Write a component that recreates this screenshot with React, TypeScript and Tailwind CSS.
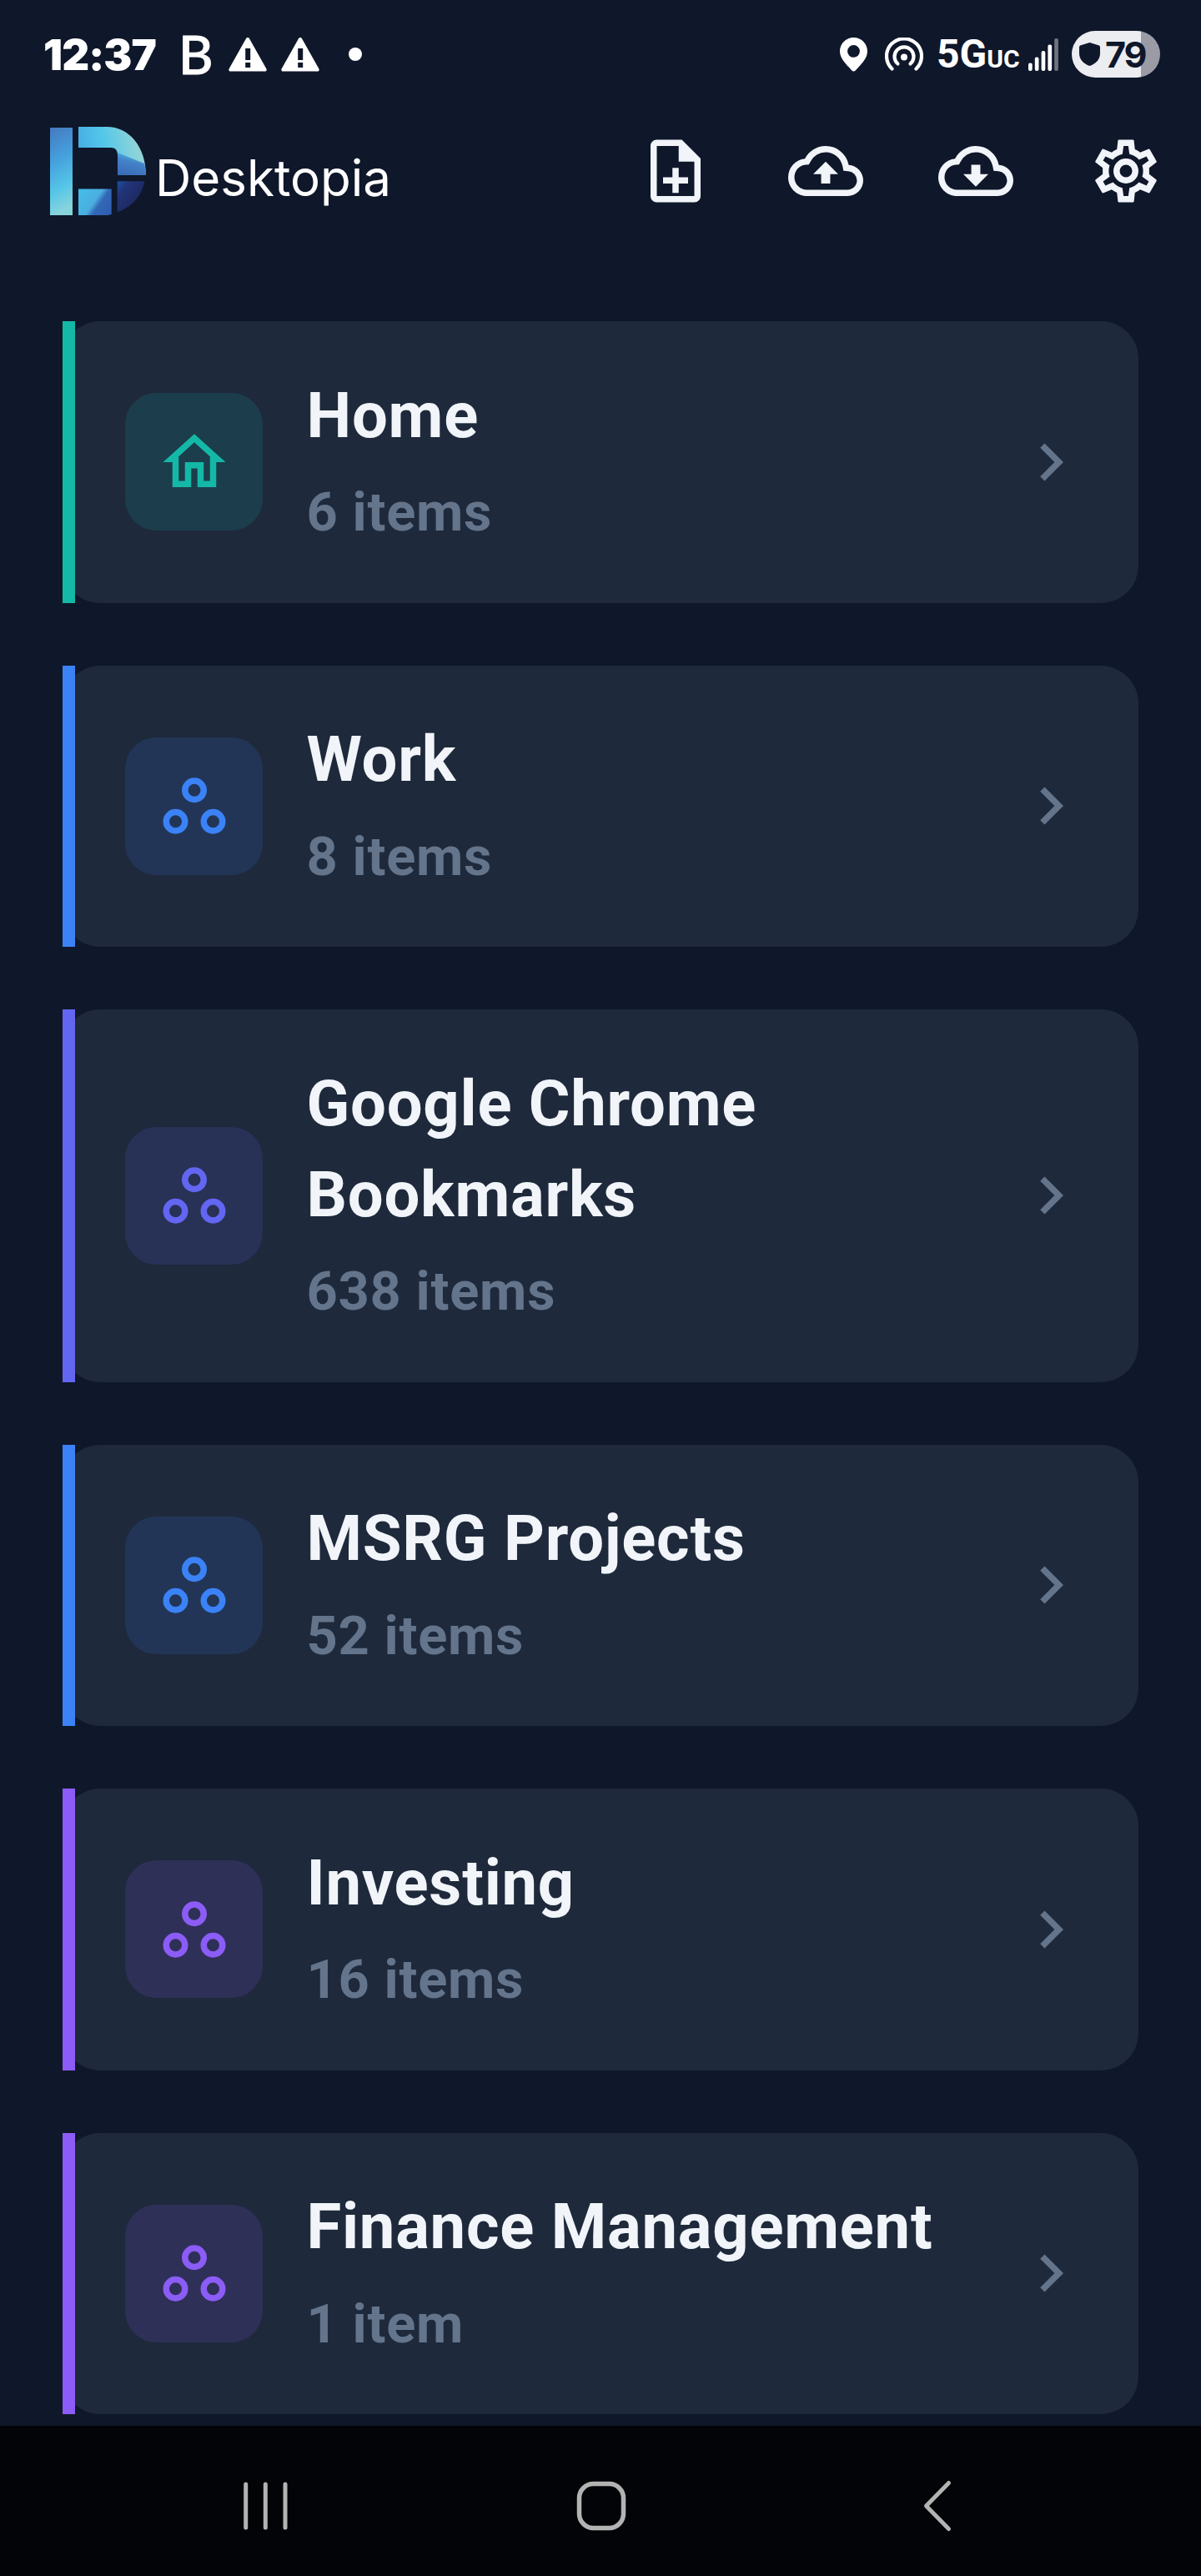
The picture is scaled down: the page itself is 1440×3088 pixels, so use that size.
import type { ComponentType } from 'react';
import {
  MdChevronRight,
  MdOutlineCloudDownload,
  MdOutlineCloudUpload,
  MdOutlineHome,
} from 'react-icons/md';

interface IconProps {
  className?: string;
}

interface Folder {
  name: string;
  count: number;
  Icon: ComponentType<IconProps>;
  bar: string;
  tile: string;
}

function WorkspacesIcon({ className }: IconProps) {
  return (
    <svg viewBox="0 0 24 24" fill="none" stroke="currentColor" strokeWidth="2" className={className}>
      <circle cx="12" cy="7" r="3" />
      <circle cx="6" cy="17" r="3" />
      <circle cx="18" cy="17" r="3" />
    </svg>
  );
}

function NoteAddIcon({ className }: IconProps) {
  return (
    <svg viewBox="0 0 24 24" fill="currentColor" className={className}>
      <path d="M14 2H6c-1.1 0-2 .9-2 2v16c0 1.1.9 2 2 2h12c1.1 0 2-.9 2-2V8l-6-6zm4 18H6V4h7v5h5v11z" />
      <path d="M11 11h2v3h3v2h-3v3h-2v-3H8v-2h3z" />
    </svg>
  );
}

function CogIcon({ className }: IconProps) {
  return (
    <svg viewBox="0 0 24 24" fill="currentColor" className={className}>
      <path
        fillRule="evenodd"
        d="M9.700 2h4.600l.25.200.320 2.870q.9.350 1.690.980l2.750-1.120.3.120 2.200 3.850-.05.300L19.430 11v2l2.330 1.800.05.300-2.200 3.850-.3.120-2.750-1.120q-.8.630-1.690.980l-.32 2.870-.25.200H9.700l-.25-.2-.32-2.870q-.9-.35-1.690-.98l-2.750 1.120-.3-.12-2.200-3.850.05-.3L4.570 13v-2L2.240 9.200l-.05-.3 2.200-3.850.3-.12 2.750 1.120q.8-.63 1.690-.98l.32-2.870zM11.250 4l-.37 2.610c-1.200.25-2.260.89-3.030 1.780L5.440 7.350l-.75 1.300L6.800 10.200c-.4 1.170-.4 2.440 0 3.600l-2.120 1.560.75 1.300 2.430-1.040c.77.88 1.820 1.520 3.010 1.760l.37 2.620h1.520l.37-2.610c1.190-.25 2.240-.89 3.010-1.770l2.430 1.040.75-1.300-2.120-1.550c.4-1.170.4-2.440 0-3.610l2.110-1.550-.75-1.300-2.410 1.040c-.77-.89-1.830-1.530-3.030-1.770L12.750 4z"
      />
      <circle cx="12" cy="12" r="3" fill="none" stroke="currentColor" strokeWidth="2" />
    </svg>
  );
}

function WarningIcon({ className }: IconProps) {
  return (
    <svg viewBox="0 0 46 41" className={className}>
      <path d="M21 1.2a2.3 2.3 0 0 1 4 0L45.4 37.6a2 2 0 0 1-1.8 3H2.4a2 2 0 0 1-1.8-3z" fill="#fff" />
      <path d="M20.2 13h6v14h-6zM20.2 30h6v6h-6z" fill="#0f172a" />
    </svg>
  );
}

const folders: Folder[] = [
  { name: 'Home', count: 6, Icon: MdOutlineHome, bar: 'bg-[#14b8a6]', tile: 'bg-[#14b8a6]/15 text-[#14b8a6]' },
  { name: 'Work', count: 8, Icon: WorkspacesIcon, bar: 'bg-[#3b82f6]', tile: 'bg-[#3b82f6]/15 text-[#3b82f6]' },
  { name: 'Google Chrome Bookmarks', count: 638, Icon: WorkspacesIcon, bar: 'bg-[#6366f1]', tile: 'bg-[#6366f1]/15 text-[#6366f1]' },
  { name: 'MSRG Projects', count: 52, Icon: WorkspacesIcon, bar: 'bg-[#3b82f6]', tile: 'bg-[#3b82f6]/15 text-[#3b82f6]' },
  { name: 'Investing', count: 16, Icon: WorkspacesIcon, bar: 'bg-[#8b5cf6]', tile: 'bg-[#8b5cf6]/15 text-[#8b5cf6]' },
  { name: 'Finance Management', count: 1, Icon: WorkspacesIcon, bar: 'bg-[#8b5cf6]', tile: 'bg-[#8b5cf6]/15 text-[#8b5cf6]' },
];

function StatusBar() {
  return (
    <div className="flex h-[130px] shrink-0 items-center justify-between pl-[52px] pr-[49px] text-white">
      <div className="flex items-center">
        <span className="w-[162px] whitespace-nowrap font-['Inter',sans-serif] text-[51px] font-black leading-none tracking-[-0.9px]">
          12:37
        </span>
        <span className="w-[60px] font-['Lato',sans-serif] text-[64px] font-medium leading-none [-webkit-text-stroke:0.8px_#fff]">
          B
        </span>
        <WarningIcon className="h-[41px] w-[46px]" />
        <WarningIcon className="ml-[17px] h-[41px] w-[46px]" />
        <span className="ml-[35px] size-4 rounded-full bg-white" />
      </div>

      <div className="flex items-center">
        <svg viewBox="0 0 33 41" className="h-[41px] w-[33px]">
          <path
            fillRule="evenodd"
            fill="#fff"
            d="M16.5 0C7.4 0 0 7.2 0 16.4 0 25.500 8 32 14.300 39.600a2.900 2.900 0 0 0 4.400 0C25 32 33 25.500 33 16.400 33 7.200 25.600 0 16.500 0zm0 9a7.400 7.400 0 1 1 0 14.800 7.400 7.400 0 0 1 0-14.800z"
          />
        </svg>
        <svg viewBox="0 0 46 40" fill="none" stroke="#fff" strokeWidth="4.200" strokeLinecap="round" className="ml-[21px] h-10 w-[46px]">
          <path d="M8.500 37.500A21 21 0 1 1 37.500 37.500" />
          <path d="M15.500 31.500A11.500 11.500 0 1 1 30.500 31.500" />
          <circle cx="23" cy="23.500" r="4" fill="#fff" stroke="none" />
        </svg>
        <span className="ml-4 flex w-[110px] items-baseline font-['Roboto',sans-serif] leading-none">
          <span className="text-[48px] font-bold">5G</span>
          <span className="text-[30px] font-bold">UC</span>
        </span>
        <svg viewBox="0 0 36 39" fill="#fff" className="h-[39px] w-9">
          <rect x="0" y="29.500" width="4.700" height="9.500" rx="2" />
          <rect x="7.800" y="22.500" width="4.700" height="16.500" rx="2" />
          <rect x="15.600" y="15" width="4.700" height="24" rx="2" />
          <rect x="23.400" y="7.500" width="4.700" height="31.500" rx="2" />
          <rect x="31.200" y="0" width="4.700" height="39" rx="2" opacity="0.4" />
        </svg>
        <div className="ml-4 flex h-14 w-[106px] items-center rounded-full bg-[linear-gradient(to_right,#ebedf0_83px,#9a9ba5_83px)] pl-[9px] text-[#0f172a]">
          <svg viewBox="0 0 25 28" className="h-7 w-[25px]">
            <path d="M12.500 0 23.800 3.600Q25 4 25 5.500V13c0 7-5 12.500-12.500 15C5 25.500 0 20 0 13V5.500Q0 4 1.200 3.600z" fill="currentColor" />
          </svg>
          <span className="ml-[6px] font-['Inter',sans-serif] text-[43px] font-bold leading-none tracking-[-2px]">79</span>
        </div>
      </div>
    </div>
  );
}

function Logo() {
  return (
    <svg viewBox="0 0 116 106" className="h-[106px] w-[116px]">
      <defs>
        <linearGradient id="stem" x1="0" y1="0" x2="0.15" y2="1">
          <stop offset="0" stopColor="#4579c0" />
          <stop offset="0.4" stopColor="#45a0dc" />
          <stop offset="0.75" stopColor="#55c6e8" />
          <stop offset="1" stopColor="#86d3dc" />
        </linearGradient>
        <linearGradient id="bowl" x1="34" y1="20" x2="100" y2="6" gradientUnits="userSpaceOnUse">
          <stop offset="0" stopColor="#47aee4" />
          <stop offset="0.45" stopColor="#53c7ea" />
          <stop offset="1" stopColor="#8fd3d8" />
        </linearGradient>
        <linearGradient id="side" x1="95" y1="32" x2="88" y2="58" gradientUnits="userSpaceOnUse">
          <stop offset="0" stopColor="#4ab4e4" />
          <stop offset="0.35" stopColor="#4382c8" />
          <stop offset="1" stopColor="#3a6bb6" />
        </linearGradient>
        <linearGradient id="foot" x1="36" y1="78" x2="74" y2="104" gradientUnits="userSpaceOnUse">
          <stop offset="0" stopColor="#45bbe8" />
          <stop offset="0.45" stopColor="#4aaee0" />
          <stop offset="0.6" stopColor="#3268b8" />
          <stop offset="1" stopColor="#2f5cb0" />
        </linearGradient>
        <linearGradient id="corner" x1="80" y1="66" x2="104" y2="86" gradientUnits="userSpaceOnUse">
          <stop offset="0" stopColor="#17529c" />
          <stop offset="0.4" stopColor="#223377" />
          <stop offset="1" stopColor="#1d2a63" />
        </linearGradient>
      </defs>
      <path d="M0 1h27v105H0z" fill="url(#stem)" />
      <path d="M34 0h34c27 0 47 24 47 58H81V34q0-9-8-9H34z" fill="url(#bowl)" />
      <path d="M81 31l32 13q2 7 2 14H81z" fill="url(#side)" />
      <path d="M34 74.500h39.700v30.500q-3 1-6 1H34z" fill="url(#foot)" />
      <path d="M80.700 65.300h32.600c-3 17-15 31-32.600 37z" fill="url(#corner)" />
    </svg>
  );
}

function Header() {
  return (
    <header className="flex h-[180px] shrink-0 items-start justify-between pl-[60px] pr-[45px] pt-[22px]">
      <div className="flex items-start">
        <Logo />
        <span className="ml-[10px] mt-[23px] whitespace-nowrap font-['Inter',sans-serif] text-[60px] leading-[76px] text-white">
          Desktopia
        </span>
      </div>
      <div className="mt-2 flex gap-[90px] text-[#f1f5f9]">
        <NoteAddIcon className="size-[90px]" />
        <MdOutlineCloudUpload className="size-[90px]" />
        <MdOutlineCloudDownload className="size-[90px]" />
        <CogIcon className="size-[90px]" />
      </div>
    </header>
  );
}

function FolderCard({ name, count, Icon, bar, tile }: Folder) {
  return (
    <div className="flex shrink-0 items-center rounded-[45px] bg-[#1e293b] pr-[60px]">
      <div className={`w-[15px] self-stretch ${bar}`} />
      <div className={`ml-[60px] flex size-[165px] shrink-0 items-center justify-center rounded-[37.5px] ${tile}`}>
        <Icon className="size-[90px]" />
      </div>
      <div className="ml-[52.5px] flex-1 pb-[60px] pt-[58.5px] font-['Roboto',sans-serif]">
        <h2 className="text-[76px] font-bold leading-[109px] tracking-[0.75px] text-[#f1f5f9]">{name}</h2>
        <p className="mt-[13.5px] text-[65px] font-bold leading-[96.500px] tracking-[0.75px] text-[#64748b]">
          {count} {count === 1 ? 'item' : 'items'}
        </p>
      </div>
      <MdChevronRight className="size-[90px] shrink-0 text-[#64748b]" />
    </div>
  );
}

function NavBar() {
  return (
    <nav className="flex h-[180px] shrink-0 items-center bg-[#030407] pt-[11px] text-[#b3b3b3]">
      <svg viewBox="0 0 56 60" fill="none" stroke="currentColor" strokeWidth="5" strokeLinecap="round" className="ml-[290px] h-[60px] w-14">
        <path d="M4.700 4v52M28.300 4v52M52 4v52" />
      </svg>
      <svg viewBox="0 0 60 60" fill="none" stroke="currentColor" strokeWidth="5.500" className="ml-[344.5px] size-[60px]">
        <rect x="3.500" y="3.500" width="53" height="53" rx="17" />
      </svg>
      <svg viewBox="0 0 36 64" fill="none" stroke="currentColor" strokeWidth="5" strokeLinecap="round" strokeLinejoin="round" className="ml-[355.5px] h-16 w-9">
        <path d="M31.500 4.500 4.500 32l27 27.500" />
      </svg>
    </nav>
  );
}

export default function App() {
  return (
    <div className="flex h-[3088px] w-[1440px] flex-col overflow-hidden bg-[#0f172a]">
      <StatusBar />
      <Header />
      <main className="flex min-h-0 flex-1 flex-col gap-[75px] px-[75px] pt-[75px]">
        {folders.map((folder) => (
          <FolderCard key={folder.name} {...folder} />
        ))}
      </main>
      <NavBar />
    </div>
  );
}
